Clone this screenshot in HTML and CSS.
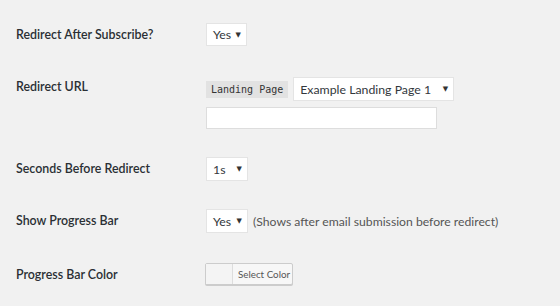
FILE: index.html
```html
<!DOCTYPE html>
<html>
<head>
<meta charset="utf-8">
<link rel="stylesheet" href="styles.css">
</head>
<body>
<div class="form">
  <div class="label">Redirect After Subscribe?</div>
  <div class="field">
    <div class="select w41"><span>Yes</span><span class="arrow">▼</span></div>
  </div>

  <div class="label raised">Redirect URL</div>
  <div class="field col">
    <div class="line">
      <code class="code">Landing Page</code>
      <div class="select w161"><span>Example Landing Page 1</span><span class="arrow">▼</span></div>
    </div>
    <div class="input"></div>
  </div>

  <div class="label">Seconds Before Redirect</div>
  <div class="field">
    <div class="select w42"><span>1s</span><span class="arrow">▼</span></div>
  </div>

  <div class="label">Show Progress Bar</div>
  <div class="field">
    <div class="select w42"><span>Yes</span><span class="arrow">▼</span></div>
    <span class="hint">(Shows after email submission before redirect)</span>
  </div>

  <div class="label">Progress Bar Color</div>
  <div class="field">
    <div class="color-btn"><span class="swatch"></span><span class="color-text">Select Color</span></div>
  </div>
</div>
</body>
</html>
```

FILE: styles.css
```css
html, body {
  margin: 0;
  padding: 0;
  background: #f1f1f1;
}
body {
  font-family: "Lato", "Open Sans", sans-serif;
  color: #23282d;
  white-space: nowrap;
}
.form {
  display: grid;
  grid-template-columns: 190px auto;
  grid-template-rows: 54px 80px 52px 54px auto;
  padding: 23px 0 0 16px;
}
.label {
  font-size: 12.4px;
  font-weight: 600;
  line-height: 23px;
  color: #2a2f34;
}
.label.raised {
  margin-top: -2px;
}
.field {
  display: flex;
  align-items: center;
  align-self: start;
  gap: 5px;
}
.field.col {
  flex-direction: column;
  align-items: flex-start;
  gap: 6px;
}
.line {
  display: flex;
  align-items: center;
  gap: 5px;
}
.select {
  box-sizing: border-box;
  height: 24px;
  background: #fff;
  border: 1px solid #e4e4e4;
  display: flex;
  align-items: center;
  justify-content: space-between;
  padding: 0 5px 0 6px;
  font-size: 12.3px;
  color: #32373c;
}
.w41 { width: 41px; height: 23px; }
.w42 { width: 42px; }
.w161 { width: 161px; }
.arrow {
  font-family: "DejaVu Sans", sans-serif;
  font-size: 7px;
  color: #333;
}
.code {
  font-family: "DejaVu Sans Mono", monospace;
  font-size: 10px;
  background: #e2e2e2;
  color: #333;
  padding: 0 5px;
  height: 17px;
  line-height: 17px;
}
.input {
  box-sizing: border-box;
  width: 231px;
  height: 22px;
  background: #fff;
  border: 1px solid #ddd;
}
.hint {
  font-size: 12.2px;
  color: #555;
}
.color-btn {
  box-sizing: border-box;
  height: 22px;
  width: 88px;
  display: flex;
  border: 1px solid #ccc;
  border-radius: 2px;
  background: #f7f7f7;
  box-shadow: 0 1px 0 #ccc;
  margin-left: -1px;
}
.swatch {
  width: 26px;
  border-right: 1px solid #ddd;
  background: #f4f4f4;
}
.color-text {
  font-size: 9.8px;
  color: #555;
  line-height: 20px;
  padding-left: 5px;
}
```
